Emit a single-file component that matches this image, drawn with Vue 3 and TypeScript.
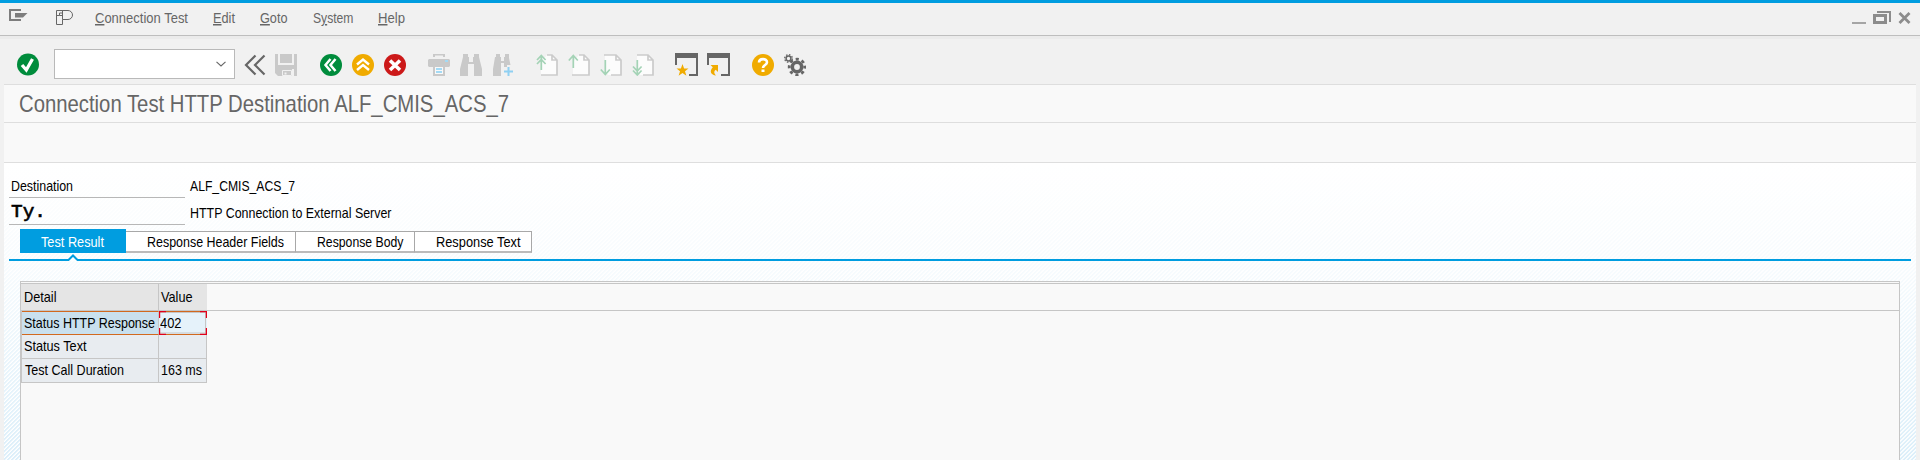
<script setup lang="ts">
import { h, type FunctionalComponent } from 'vue'

interface FitProps {
  text: string
  w: number
  size?: number
  hot?: number
}

// One line of condensed text, fitted to a fixed advance width.
const Fit: FunctionalComponent<FitProps> = (p) => {
  const size = p.size ?? 15
  const hot = p.hot ?? -1
  const parts =
    hot < 0
      ? p.text
      : [
          p.text.slice(0, hot),
          h('tspan', { 'text-decoration': 'underline' }, p.text.slice(hot, hot + 1)),
          p.text.slice(hot + 1),
        ]
  return h('svg', { class: 'fit', width: p.w, height: size + 2 }, [
    h(
      'text',
      {
        x: 0,
        y: size - 1,
        'font-size': size,
        fill: 'currentColor',
        textLength: p.w,
        lengthAdjust: 'spacingAndGlyphs',
      },
      parts,
    ),
  ])
}
Fit.props = ['text', 'w', 'size', 'hot']

const menu = [
  { text: 'Connection Test', w: 93, hot: 0 },
  { text: 'Edit', w: 22, hot: 0 },
  { text: 'Goto', w: 27.5, hot: 0 },
  { text: 'System', w: 40.5, hot: 1 },
  { text: 'Help', w: 27, hot: 0 },
]

const tabs = [
  { text: 'Test Result', w: 63, cls: 'active' },
  { text: 'Response Header Fields', w: 137, cls: 'headers' },
  { text: 'Response Body', w: 86.5, cls: 'body' },
  { text: 'Response Text', w: 84.5, cls: 'text' },
]

const rows = [
  { label: 'Status HTTP Response', lw: 131, value: '402', vw: 21.5, cls: 'selected' },
  { label: 'Status Text', lw: 62.5, value: '', vw: 0, cls: '' },
  { label: 'Test Call Duration', lw: 99, value: '163 ms', vw: 41, cls: 'last' },
]
</script>

<template>
  <div class="window">
    <header class="menubar">
      <svg class="ic-session" width="19" height="14" viewBox="0 0 19 14">
        <path d="M12 2H1v10h11" fill="none" stroke="#7d7d7d" stroke-width="2" />
        <path d="M6 5h12.500L14 9.500H6z" fill="#7d7d7d" />
      </svg>
      <svg class="ic-p" width="18" height="16" viewBox="0 0 18 16" fill="none" stroke="#666" stroke-width="1">
        <path d="M1.500 .5h11.500a4.500 4.500 0 0 1 0 9H7.500v5H1.500z" />
        <path d="M7.500 .5v9M1.500 5.500h3v-2.500h3M4.500 5.500h3" />
      </svg>
      <nav class="menu">
        <Fit v-for="m in menu" :key="m.text" :text="m.text" :w="m.w" :hot="m.hot" />
      </nav>
      <svg class="ic-win" width="60" height="14" viewBox="0 0 60 14" fill="none" stroke="#8c8c8c">
        <path d="M0 12h14" stroke-width="2" stroke="#a5a5a5" />
        <path d="M22.500 4.500h11v7h-11z" stroke-width="3" />
        <path d="M25 1h13v10" stroke-width="2" />
        <path d="M47.500 2l10 10M57.500 2l-10 10" stroke-width="2.800" />
      </svg>
    </header>

    <div class="toolbar">
      <svg class="ic-ok" width="22" height="23" viewBox="0 0 22 22">
        <circle cx="11" cy="11" r="11" fill="#008c3c" />
        <path d="M5 11.500l4.300 5 6.200-11" fill="none" stroke="#fff" stroke-width="3.300" />
      </svg>
      <div class="command">
        <svg width="10" height="6" viewBox="0 0 10 6"><path d="M.5.8L5 5 9.500.8" fill="none" stroke="#666" stroke-width="1.100" /></svg>
      </div>
      <svg class="ic-back" width="22" height="22" viewBox="0 0 22 22" fill="none" stroke="#666" stroke-width="2.200">
        <path d="M11.500 1.500L2 11l9.500 9.500M20.500 1.500L11 11l9.500 9.500" />
      </svg>
      <svg class="ic-save" width="22" height="22" viewBox="0 0 22 22">
        <path d="M0 0h3v11h16V0h3v22h-3v-7H7v7H3l-3-3z" fill="#c9c9c9" />
        <path d="M5 0h12v9H5zM7 15h10v7H7z" fill="#c9c9c9" />
        <path d="M7.500 16.500h9v5h-9z" fill="none" stroke="#f1f1f1" />
        <path d="M9.500 18.500h2v2h-2z" fill="#f1f1f1" />
      </svg>

      <div class="group nav">
        <svg width="22" height="22" viewBox="0 0 22 22">
          <circle cx="11" cy="11" r="11" fill="#008c3c" />
          <path d="M10.500 5L5.500 11l5 6M15.500 5l-5 6 5 6" fill="none" stroke="#fff" stroke-width="2.500" />
        </svg>
        <svg width="22" height="22" viewBox="0 0 22 22">
          <circle cx="11" cy="11" r="11" fill="#f0ab00" />
          <path d="M5 10.500l6-5 6 5M5 16l6-5 6 5" fill="none" stroke="#fff" stroke-width="2.400" />
        </svg>
        <svg width="22" height="22" viewBox="0 0 22 22">
          <circle cx="11" cy="11" r="11" fill="#cc1919" />
          <path d="M6 6.500l10 9.500M16 6.500L6 16" fill="none" stroke="#fff" stroke-width="3.600" />
        </svg>
      </div>

      <div class="group print">
        <svg width="22" height="22" viewBox="0 0 22 22">
          <path d="M5 3V0h12v3h-2V1.500H7V3zM1 5h20l1 1v6l-1 1H1l-1-1V6z" fill="#c9c9c9" />
          <path d="M6 12h10v9H6z" fill="#f9f9f9" stroke="#c9c9c9" stroke-width="2" />
          <path d="M8 15h6M8 18h6" stroke="#a3daf5" stroke-width="2" /><path d="M17 6h3v2h-3z" fill="#a3daf5" />
        </svg>
        <svg width="22" height="22" viewBox="0 0 22 22" fill="#c9c9c9">
          <path d="M3 0h5v3h1v5h4V3h1V0h5v3l3 12v7h-8V10H8v12H0v-7L3 3z" />
        </svg>
        <svg width="22" height="22" viewBox="0 0 22 22" fill="#c9c9c9">
          <path d="M4 0h4v3h1v4h3V3h1V0h4v4l1.500 7H15v2h-3V9H9v13H1v-7L3 3h1z" />
          <path d="M16.500 13v9M12 17.500h9" stroke="#8fd0f2" stroke-width="2" />
        </svg>
      </div>

      <div class="group pages">
        <svg width="22" height="22" viewBox="0 0 22 22">
          <path d="M5 20V8l6-7h5l5 5v15H5z" fill="#fcfcfc" />
          <path d="M5 21h16V6l-5-5h-5M16 1v5h5" fill="none" stroke="#cbcbcb" stroke-width="1.700" />
          <path d="M5.300 16V1.500M1 6l4.300-4.500L9.600 6M1 10l4.300-4.500L9.600 10" fill="none" stroke="#a4d3b6" stroke-width="1.700" />
        </svg>
        <svg width="22" height="22" viewBox="0 0 22 22">
          <path d="M5 20V8l6-7h5l5 5v15H5z" fill="#fcfcfc" />
          <path d="M4 21h17V6l-5-5h-5M16 1v5h5" fill="none" stroke="#cbcbcb" stroke-width="1.700" />
          <path d="M5.300 14V1.500M.8 6.500l4.500-5 4.500 5" fill="none" stroke="#a4d3b6" stroke-width="1.700" />
        </svg>
        <svg width="22" height="22" viewBox="0 0 22 22">
          <path d="M5 1h11l5 5v15H8L5 16z" fill="#fcfcfc" />
          <path d="M4 1h12l5 5v15H11M16 1v5h5" fill="none" stroke="#cbcbcb" stroke-width="1.700" />
          <path d="M5.300 6v14.500M.8 15.500l4.500 5 4.500-5" fill="none" stroke="#a4d3b6" stroke-width="1.700" />
        </svg>
        <svg width="22" height="22" viewBox="0 0 22 22">
          <path d="M5 1h11l5 5v15H8L5 16z" fill="#fcfcfc" />
          <path d="M5 1h11l5 5v15H11M16 1v5h5" fill="none" stroke="#cbcbcb" stroke-width="1.700" />
          <path d="M5.300 6v14.500M1 12.500L5.300 17l4.300-4.500M1 16.500L5.300 21l4.300-4.500" fill="none" stroke="#a4d3b6" stroke-width="1.700" />
        </svg>
      </div>

      <div class="group sessions">
        <svg width="23" height="23" viewBox="0 0 23 23">
          <path d="M0 0h23v23h-9v-2h7V5H2v7H0z" fill="#666" />
          <path d="M7.500 11l1.600 4.500h4.400l-3.500 2.700 1.400 4.500-3.900-2.800-3.900 2.800L5 18.200l-3.500-2.700h4.400z" fill="#f0ab00" />
        </svg>
        <svg width="23" height="23" viewBox="0 0 23 23">
          <path d="M0 0h23v23h-9v-2h7V5H2v7H0z" fill="#666" />
          <path d="M3.500 12H11v7l-2.300-2.200C6.500 18.500 7 20.500 9 22.500 4 22 2 18.500 5.800 14.300z" fill="#f0ab00" />
        </svg>
      </div>

      <div class="group help">
        <svg width="22" height="22" viewBox="0 0 22 22">
          <circle cx="11" cy="11" r="11" fill="#f0ab00" />
          <path d="M7 8.500C7 4 15 4 15 8.300c0 2.700-4 2.700-4 5.700" fill="none" stroke="#fff" stroke-width="2.600" />
          <path d="M9.500 15.500h3V18h-3z" fill="#fff" />
        </svg>
        <svg width="22" height="22" viewBox="0 0 22 22" fill="none" stroke="#666">
          <circle cx="13" cy="13" r="4.700" stroke-width="3.600" />
          <circle cx="13" cy="13" r="7.800" stroke-width="2.800" stroke-dasharray="3.100 3.026" stroke-dashoffset="1.550" />
          <circle cx="4.500" cy="4.500" r="2.400" stroke-width="1.500" />
          <circle cx="4.500" cy="4.500" r="3.800" stroke-width="1.400" stroke-dasharray="1.500 1.484" />
        </svg>
      </div>
    </div>

    <main class="screen">
      <h1 class="title"><Fit text="Connection Test HTTP Destination ALF_CMIS_ACS_7" :w="490" :size="24" /></h1>
      <div class="appbar"></div>
      <section class="content">
        <div class="fields">
          <div class="label"><Fit text="Destination" :w="62" /></div>
          <Fit class="val" text="ALF_CMIS_ACS_7" :w="105" />
          <div class="label second"><Fit class="mono" text="Ty." :w="35" :size="18" /></div>
          <Fit class="val second" text="HTTP Connection to External Server" :w="201.5" />
        </div>
        <div class="tabs">
          <div v-for="t in tabs" :key="t.text" class="tab" :class="t.cls"><Fit :text="t.text" :w="t.w" /></div>
        </div>
        <div class="rule">
          <svg class="notch" width="12" height="7" viewBox="0 0 12 7">
            <path d="M1 7l5-5 5 5z" fill="#fff" />
            <path d="M0 6h1.500L6 1.500 10.500 6H12" fill="none" stroke="#009de0" stroke-width="2" />
          </svg>
        </div>
        <div class="grid">
          <div class="thead">
            <div class="cell first"><Fit text="Detail" :w="32.5" /></div>
            <div class="cell value"><Fit text="Value" :w="31.500" /></div>
          </div>
          <div v-for="r in rows" :key="r.label" class="row" :class="r.cls">
            <div class="cell first"><Fit :text="r.label" :w="r.lw" /></div>
            <div class="cell value">
              <Fit v-if="r.value" :text="r.value" :w="r.vw" />
              <svg v-if="r.cls === 'selected'" class="focus" width="48" height="24" viewBox="0 0 48 24" fill="none">
                <path d="M0 1.500h47M0 22h47M46.500 1v22" stroke="#c6c6c6" />
                <path d="M7 .5h34M7 23.500h34" stroke="#d2691e" />
                <path d="M7 .5H.5V7M41 .5h6.500V7M.5 17v6.500H7M47.500 17v6.500H41" stroke="#e2001a" stroke-width="1.400" />
              </svg>
            </div>
          </div>
        </div>
      </section>
    </main>
  </div>
</template>

<style>
body { background: #f1f1f1; overflow: hidden; }
</style>

<style scoped>
.window {
  box-sizing: border-box;
  width: 1920px;
  height: 460px;
  overflow: hidden;
  border-top: 3px solid #009de0;
  background: #f1f1f1;
  font-family: "Liberation Sans", Arial, sans-serif;
  color: #000;
  display: flex;
  flex-direction: column;
}
svg { display: block; flex: none; }
.fit { overflow: visible; }
.menubar {
  box-sizing: border-box;
  flex: none;
  height: 36px;
  border-bottom: 3px solid #ebebeb;
  box-shadow: inset 0 -1px #bebebe;
  display: flex;
  align-items: flex-start;
  padding: 0 8px 0 9px;
  color: #666;
}
.ic-session { margin-top: 5px; }
.ic-p { margin: 7px 0 0 27px; }
.menu { display: flex; gap: 25px; margin: 6px 0 0 22px; }
.ic-win { margin: 8px 0 0 auto; }
.toolbar {
  flex: none;
  height: 45px;
  display: flex;
  align-items: flex-start;
  padding: 15px 0 0 17px;
  box-sizing: border-box;
}
.ic-ok { margin-top: -1px; }
.command {
  box-sizing: border-box;
  width: 181px;
  height: 30px;
  margin: -5px 9px 0 15px;
  border: 1px solid #b9b9b9;
  background: #fff;
  display: flex;
  align-items: center;
  justify-content: flex-end;
  padding-right: 8px;
}
.ic-save { margin-left: 9px; }
.group { display: flex; gap: 10px; margin-left: 22px; }
.group.nav { margin-left: 23px; }
.group.sessions { margin: -1px 0 0 21px; gap: 9px; }
.screen {
  flex: 1;
  min-height: 0;
  margin: 0 4px;
  display: flex;
  flex-direction: column;
  background: #fff;
}
.title {
  box-sizing: border-box;
  flex: none;
  height: 39px;
  margin: 0;
  padding: 4px 0 0 15px;
  border-top: 1px solid #dedede;
  border-bottom: 1px solid #dedede;
  background: #f9f9f9;
  font-weight: normal;
  color: #666;
}
.appbar {
  box-sizing: border-box;
  flex: none;
  height: 40px;
  border-bottom: 1px solid #dedede;
  background: #f9f9f9;
}
.content {
  flex: 1;
  min-height: 0;
  display: flex;
  flex-direction: column;
  background:
    linear-gradient(#fff, rgba(255, 255, 255, 0.8) 35%, rgba(255, 255, 255, 0.1)),
    repeating-linear-gradient(135deg, #d8edf9 0, #d8edf9 1px, #fff 1.700px, #fff 2.200px, #d8edf9 2.828px);
}
.fields {
  flex: none;
  display: grid;
  grid-template-columns: 176px 1fr;
  grid-template-rows: 35px 27px;
  padding-left: 5px;
}
.label { box-sizing: border-box; border-bottom: 1px solid #b7b7b7; padding: 14px 0 0 2px; }
.label.second { padding-top: 2px; }
.val { margin: 14px 0 0 5px; }
.val.second { margin-top: 6px; }
.mono { font-family: "Liberation Mono", monospace; stroke: currentColor; stroke-width: 0.6px; }
.tabs { flex: none; display: flex; align-items: flex-start; height: 24px; margin: 4px 0 0 16px; }
.tab {
  box-sizing: border-box;
  height: 22px;
  margin-top: 2px;
  padding: 1px 0 0 21px;
  background: #fff;
  border: solid #a8a8a8;
  border-width: 1px 1px 2px 0;
  border-bottom-color: #bbb;
}
.tab.active { width: 106px; height: 24px; margin: 0; padding-top: 4px; border: 0; background: #009de0; color: #fff; }
.tab.headers { width: 170px; }
.tab.body { width: 119px; }
.tab.text { width: 117px; }
.rule { flex: none; position: relative; height: 2px; margin: 6px 5px 0; background: #009de0; }
.notch { position: absolute; left: 58px; top: -5px; }
.grid {
  box-sizing: border-box;
  flex: 1;
  margin: 20px 16px 0;
  border: solid #c6c6c6;
  border-width: 1px 1px 0;
  background: #f9f9f9;
}
.thead, .row { display: flex; box-sizing: border-box; }
.thead { height: 28px; margin-top: 1px; border: solid #c6c6c6; border-width: 1px 0; }
.cell { box-sizing: border-box; padding: 2px 0 0 2px; }
.cell.first { width: 138px; border-right: 1px solid #c6c6c6; }
.cell.value { width: 48px; padding-left: 1px; position: relative; }
.thead .cell { background: #e5e5e5; padding: 4px 0 0 3px; }
.thead .cell.value { padding-left: 2px; }
.row { width: 186px; height: 24px; border: solid #c6c6c6; border-width: 0 0 1px 1px; }
.row .cell { background: #e8ecf0; }
.row .first { width: 137px; }
.row .value { border-right: 1px solid #c6c6c6; }
.row.selected { border-bottom: 0; }
.row.selected .first { background: #c9e0ee; border-top: 1px solid #d2691e; border-bottom: 1px solid #d2691e; }
.row.selected .value { background: #e5f2fa; padding-top: 3px; border: 0; }
.row.last .cell { padding-left: 3px; }
.row.last .value { padding-left: 2px; }
.focus { position: absolute; left: 0; top: 0; }
</style>
